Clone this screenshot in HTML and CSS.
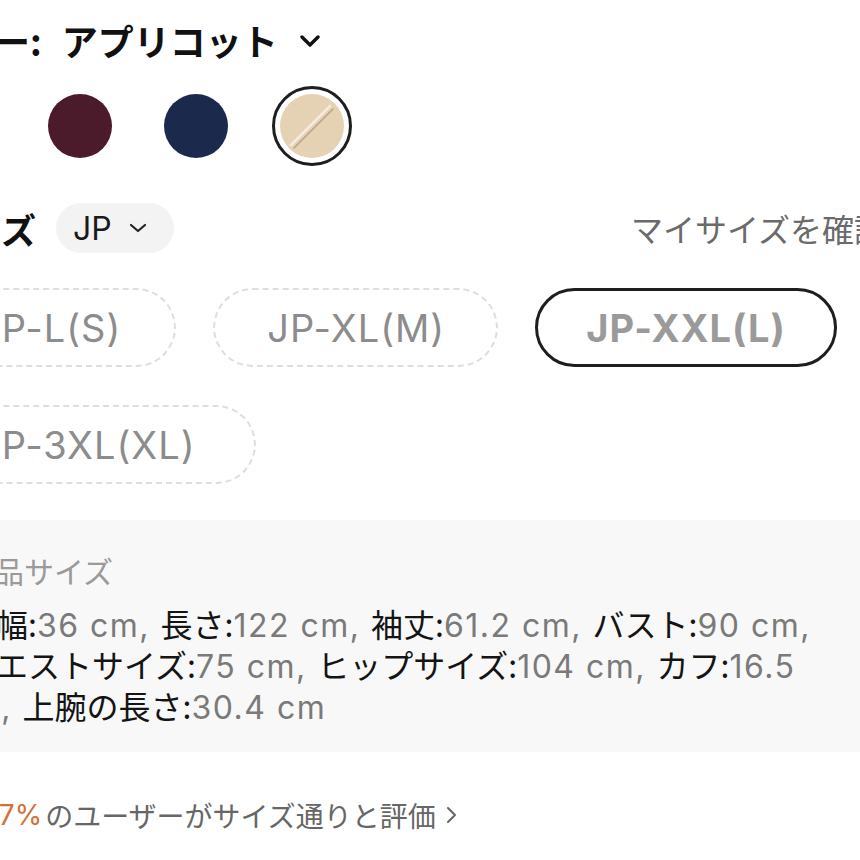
FILE: index.html
```html
<!DOCTYPE html>
<html lang="ja">
<head>
<meta charset="utf-8">
<title>サイズ選択</title>
<link rel="stylesheet" href="styles.css">
</head>
<body>
<div class="page">
  <div class="color-title">
    <span>カラー:</span><span class="color-value">アプリコット</span>
    <svg class="title-chev" width="20" height="12" viewBox="0 0 20 12"><path d="M2 2 L10 10 L18 2" fill="none" stroke="#111" stroke-width="3.4" stroke-linecap="round" stroke-linejoin="round"/></svg>
  </div>

  <div class="swatches">
    <div class="swatch"><span class="dot dot-pink"></span></div>
    <div class="swatch"><span class="dot dot-wine"></span></div>
    <div class="swatch"><span class="dot dot-navy"></span></div>
    <div class="swatch swatch-selected">
      <svg class="dot-svg" width="64" height="64" viewBox="0 0 64 64">
        <circle cx="32" cy="32" r="32" fill="#e5d2b5"/>
        <line x1="11" y1="51" x2="50" y2="12" stroke="#f4ebdc" stroke-width="2.6" stroke-linecap="round"/>
        <line x1="14" y1="54" x2="53" y2="15" stroke="#bba486" stroke-width="1.6" stroke-linecap="round"/>
      </svg>
    </div>
  </div>

  <div class="size-head">
    <span class="size-label">サイズ</span>
    <span class="region-pill">JP
      <svg class="pill-chev" width="18" height="10" viewBox="0 0 18 10"><path d="M2 2 L9 8 L16 2" fill="none" stroke="#222" stroke-width="2.2" stroke-linecap="round" stroke-linejoin="round"/></svg>
    </span>
    <span class="my-size">マイサイズを確認</span>
  </div>

  <div class="size-options">
    <span class="size-btn size-l">JP-L(S)</span>
    <span class="size-btn size-xl">JP-XL(M)</span>
    <span class="size-btn size-btn-selected">JP-XXL(L)</span>
    <span class="size-btn size-3xl">JP-3XL(XL)</span>
  </div>

  <div class="measure-box">
    <div class="measure-title">商品サイズ</div>
    <div class="measure-text">
      <div class="mline"><span class="k">肩幅:</span><span class="v">36 cm, </span><span class="k">長さ:</span><span class="v">122 cm, </span><span class="k">袖丈:</span><span class="v">61.2 cm, </span><span class="k">バスト:</span><span class="v">90 cm,</span></div>
      <div class="mline"><span class="k">ウエストサイズ:</span><span class="v">75 cm, </span><span class="k">ヒップサイズ:</span><span class="v">104 cm, </span><span class="k">カフ:</span><span class="v">16.5</span></div>
      <div class="mline mline-last"><span class="v">cm, </span><span class="k">上腕の長さ:</span><span class="v">30.4 cm</span></div>
    </div>
  </div>

  <div class="fit-line">
    <span class="fit-pct">97%</span><span class="fit-text">のユーザーがサイズ通りと評価</span>
    <svg class="fit-chev" width="12" height="20" viewBox="0 0 12 20"><path d="M2 3 L9 10 L2 17" fill="none" stroke="#666" stroke-width="2" stroke-linecap="round" stroke-linejoin="round"/></svg>
  </div>
</div>
</body>
</html>
```

FILE: styles.css
```css
html, body {
  margin: 0;
  padding: 0;
  background: #ffffff;
  overflow: hidden;
}

body {
  width: 860px;
  height: 860px;
  font-family: "Inter", "Noto Sans CJK JP", sans-serif;
  color: #111;
}

.page {
  margin-left: -76px;
  width: 962px;
}

.color-title {
  display: flex;
  align-items: center;
  margin-left: -2px;
  padding-top: 16px;
  height: 48px;
  font-size: 36px;
  font-weight: 700;
  line-height: 48px;
  font-family: "Noto Sans CJK JP", sans-serif;
  color: #111;
}

.color-sep {
  margin-left: -4px;
}

.color-value {
  margin-left: 20px;
}

.title-chev {
  margin-left: 22px;
  margin-top: 2px;
}

.swatches {
  display: flex;
  gap: 36px;
  margin-top: 22px;
}

.swatch {
  width: 80px;
  height: 80px;
  box-sizing: border-box;
  display: flex;
  align-items: center;
  justify-content: center;
  border-radius: 50%;
}

.dot {
  width: 64px;
  height: 64px;
  border-radius: 50%;
  display: block;
}

.dot-pink { background: #c98a97; }
.dot-wine { background: #4b1b2b; }
.dot-navy { background: #1b2a4c; }

.swatch-selected {
  border: 3px solid #1e1e1e;
}

.dot-svg {
  display: block;
}

.size-head {
  display: flex;
  align-items: center;
  margin-top: 37px;
  height: 50px;
}

.size-label {
  margin-left: 8px;
  font-family: "Noto Sans CJK JP", sans-serif;
  font-size: 35px;
  font-weight: 700;
  color: #111;
}

.region-pill {
  display: flex;
  align-items: center;
  height: 50px;
  margin-left: 20px;
  padding: 0 27px 0 17px;
  border-radius: 25px;
  background: #f3f3f3;
  font-size: 32px;
  color: #1a1a1a;
}

.pill-chev {
  margin-left: 17px;
}

.my-size {
  margin-left: auto;
  font-family: "Noto Sans CJK JP", sans-serif;
  font-size: 32px;
  color: #6a6a6a;
  white-space: nowrap;
}

.size-options {
  display: flex;
  flex-wrap: wrap;
  gap: 38px 37px;
  margin-top: 35px;
  width: 940px;
}

.size-btn {
  display: flex;
  align-items: center;
  justify-content: center;
  height: 79px;
  box-sizing: border-box;
  padding: 0 53px;
  border: 2px dashed #dedede;
  border-radius: 40px;
  font-size: 38px;
  letter-spacing: 1px;
  color: #8c8c8c;
  white-space: nowrap;
}

.size-xl {
  padding: 0 51px 0 52px;
}

.size-btn-selected {
  border: 3px solid #1e1e1e;
  font-weight: 700;
  color: #9a9a9a;
  padding: 0 48px;
}

.size-3xl {
  padding-right: 58px;
}

.measure-box {
  margin-top: 36px;
  background: #f8f8f8;
  padding: 30px 0 26px 40px;
}

.measure-title {
  font-family: "Noto Sans CJK JP", sans-serif;
  font-size: 30px;
  line-height: 40px;
  color: #9a9a9a;
}

.measure-text {
  margin-top: 13px;
  font-size: 32px;
  line-height: 41px;
  white-space: nowrap;
}

.mline {
  height: 41px;
}

.mline-last {
  margin-left: -12px;
}

.k {
  color: #141414;
  font-family: "Noto Sans CJK JP", sans-serif;
}

.v {
  color: #7a7a7a;
  letter-spacing: 1.5px;
}

.fit-line {
  display: flex;
  align-items: center;
  margin-top: 43px;
  padding-left: 58px;
  height: 40px;
  font-size: 28px;
  white-space: nowrap;
}

.fit-pct {
  color: #d0713a;
  margin-right: 3px;
}

.fit-text {
  font-family: "Noto Sans CJK JP", sans-serif;
  color: #666;
}

.fit-chev {
  margin-left: 10px;
}
```
